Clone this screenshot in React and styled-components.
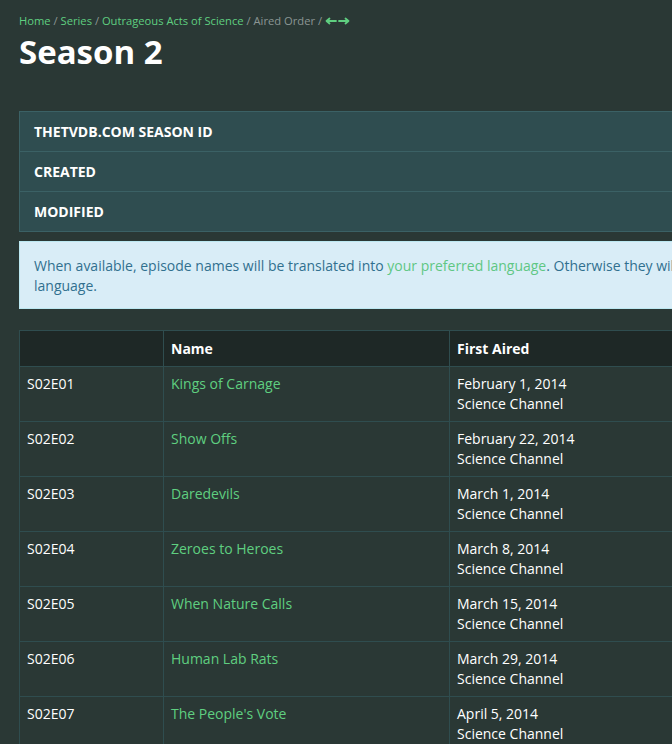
import React from 'react';
import styled, { createGlobalStyle } from 'styled-components';

const GlobalStyle = createGlobalStyle`
  html, body {
    margin: 0;
    padding: 0;
    background: #2a3835;
    overflow: hidden;
  }
  body {
    font-family: "Open Sans", "Noto Sans", "Liberation Sans", sans-serif;
    font-size: 14px;
    line-height: 20px;
    color: #ffffff;
  }
`;

const Page = styled.div`
  width: 880px;
  padding: 12px 19px 0;
`;

const Crumbs = styled.div`
  font-size: 11.2px;
  line-height: 17px;
  color: #8a9694;
  display: flex;
  align-items: center;
  white-space: pre;
`;

const CrumbLink = styled.a`
  color: #5fcf80;
  text-decoration: none;
`;

const Arrow = styled.svg`
  width: 12px;
  height: 8px;
  margin-right: 1px;
`;

const Title = styled.h1`
  margin: 3px 0 39px;
  font-size: 33px;
  line-height: 40px;
  font-weight: 700;
  color: #ffffff;
`;

const InfoTable = styled.div`
  display: flex;
  flex-direction: column;
  background: #2f4d50;
  border: 1px solid #3b6165;
  margin-bottom: 9px;
`;

const InfoRow = styled.div`
  height: 39px;
  display: flex;
  align-items: center;
  padding: 0 14px;
  font-weight: 700;
  text-transform: uppercase;
  border-top: ${p => (p.first ? 'none' : '1px solid #3b6165')};
`;

const Alert = styled.div`
  background: #d9edf7;
  color: #31708f;
  border: 1px solid #bce8f1;
  padding: 14px 14px 12px;
  margin-bottom: 21px;
`;

const AlertLink = styled.a`
  color: #5fc784;
  text-decoration: none;
`;

const Table = styled.div`
  display: grid;
  grid-template-columns: 143px 286px 1fr;
  border: 1px solid #2f4d4f;
  border-right: none;
`;

const HeadCell = styled.div`
  background: #1e2826;
  height: 35px;
  display: flex;
  align-items: center;
  padding: 0 7px;
  font-weight: 700;
  border-left: ${p => (p.first ? 'none' : '1px solid #2f4d4f')};
`;

const Cell = styled.div`
  padding: 7px;
  border-top: 1px solid #2f4d4f;
  border-left: ${p => (p.first ? 'none' : '1px solid #2f4d4f')};
  color: ${p => (p.link ? '#5fcf80' : '#ffffff')};
  min-height: 40px;
`;

const episodes = [
  ['S02E01', 'Kings of Carnage', 'February 1, 2014'],
  ['S02E02', 'Show Offs', 'February 22, 2014'],
  ['S02E03', 'Daredevils', 'March 1, 2014'],
  ['S02E04', 'Zeroes to Heroes', 'March 8, 2014'],
  ['S02E05', 'When Nature Calls', 'March 15, 2014'],
  ['S02E06', 'Human Lab Rats', 'March 29, 2014'],
  ['S02E07', "The People's Vote", 'April 5, 2014'],
  ['S02E08', 'Extreme Speed', 'April 12, 2014'],
];

const LeftArrow = () => (
  <Arrow viewBox="0 0 12 8">
    <path d="M11 4H2M4.5 1.5 1.5 4l3 2.5" fill="none" stroke="#5fcf80" strokeWidth="1.8" strokeLinecap="round" strokeLinejoin="round" />
  </Arrow>
);

const RightArrow = () => (
  <Arrow viewBox="0 0 12 8">
    <path d="M1 4h9M7.5 1.5l3 2.5-3 2.5" fill="none" stroke="#5fcf80" strokeWidth="1.8" strokeLinecap="round" strokeLinejoin="round" />
  </Arrow>
);

const App = () => {
  return (
    <Page>
      <GlobalStyle />
      <Crumbs>
        <CrumbLink href="#">Home</CrumbLink>
        {' / '}
        <CrumbLink href="#">Series</CrumbLink>
        {' / '}
        <CrumbLink href="#">Outrageous Acts of Science</CrumbLink>
        {' / Aired Order / '}
        <LeftArrow />
        <RightArrow />
      </Crumbs>
      <Title>Season 2</Title>
      <InfoTable>
        <InfoRow first>TheTVDB.com Season ID</InfoRow>
        <InfoRow>Created</InfoRow>
        <InfoRow>Modified</InfoRow>
      </InfoTable>
      <Alert>
        When available, episode names will be translated into{' '}
        <AlertLink href="#">your preferred language</AlertLink>. Otherwise they will be displayed in the
        original language.
      </Alert>
      <Table>
        <HeadCell first />
        <HeadCell>Name</HeadCell>
        <HeadCell>First Aired</HeadCell>
        {episodes.map(([code, name, date]) => (
          <React.Fragment key={code}>
            <Cell first>{code}</Cell>
            <Cell link>{name}</Cell>
            <Cell>
              {date}
              <br />
              Science Channel
            </Cell>
          </React.Fragment>
        ))}
      </Table>
    </Page>
  );
};

export default App;
